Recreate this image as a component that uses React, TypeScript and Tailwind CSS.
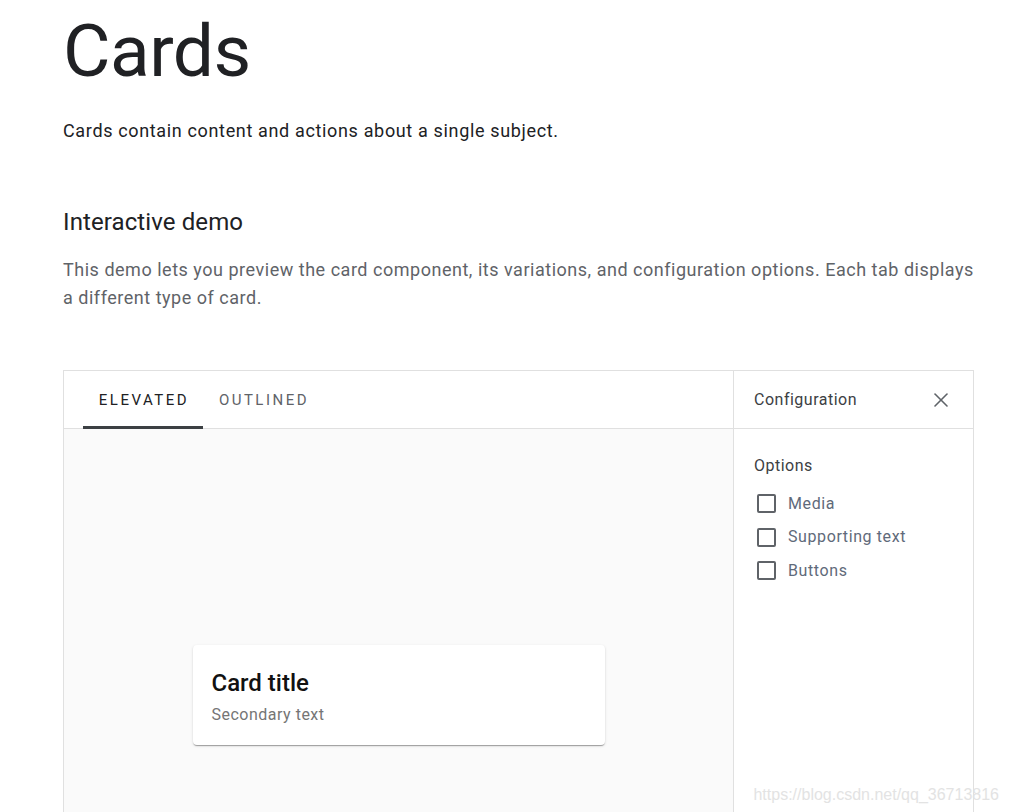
import { X } from "lucide-react";

const OPTIONS = ["Media", "Supporting text", "Buttons"];

export default function App() {
  return (
    <div
      className="relative h-[812px] overflow-hidden bg-white pl-[63px] pr-[36px] text-[#202124]"
      style={{ fontFamily: "Roboto, 'Noto Sans', sans-serif" }}
    >
      <h1 className="pt-[11px] text-[73px] leading-[80px] font-normal tracking-[-0.5px] text-[#202124]">
        Cards
      </h1>
      <p className="mt-[26px] text-[18px] leading-[28px] tracking-[0.65px] text-[#202124]">
        Cards contain content and actions about a single subject.
      </p>

      <h2 className="mt-[61px] text-[24px] leading-[32px] font-normal tracking-[0.1px] text-[#202124]">
        Interactive demo
      </h2>
      <p className="mt-[18px] text-[18px] leading-[28px] tracking-[0.52px] text-[#5f6368]">
        This demo lets you preview the card component, its variations, and configuration options. Each tab displays a
        different type of card.
      </p>

      <div className="mt-[58px] flex w-[911px] border border-[#e0e0e0]">
        {/* preview side */}
        <div className="flex flex-1 flex-col">
          <div className="flex h-[58px] items-stretch border-b border-[#e0e0e0] pl-[19px] pt-[2px]">
            <div className="relative flex w-[120px] items-center justify-center pl-[2px] text-[15px] font-normal tracking-[2.5px] text-[#202124]">
              ELEVATED
              <span className="absolute bottom-[-1px] left-0 right-0 h-[3px] bg-[#3c4043]" />
            </div>
            <div className="flex w-[120px] items-center justify-center pl-[2px] text-[15px] font-normal tracking-[2.5px] text-[#5f6368]">
              OUTLINED
            </div>
          </div>
          <div className="flex h-[532px] items-center justify-center bg-[#fafafa]">
            <div className="h-[100px] w-[412px] rounded-[4px] bg-white px-[19px] pt-[22px] shadow-[0_2px_1px_-1px_rgba(0,0,0,0.2),0_1px_1px_0_rgba(0,0,0,0.14),0_1px_3px_0_rgba(0,0,0,0.12)]">
              <div className="text-[24px] leading-[32px] font-medium text-[#111]">Card title</div>
              <div className="mt-[5px] text-[16px] leading-[22px] tracking-[0.5px] text-[#757575]">Secondary text</div>
            </div>
          </div>
        </div>

        {/* configuration side */}
        <div className="flex w-[240px] flex-col border-l border-[#e0e0e0]">
          <div className="flex h-[58px] items-center justify-between border-b border-[#e0e0e0] pl-[20px] pr-[20px]">
            <span className="text-[16px] tracking-[0.5px] text-[#3c4043]">Configuration</span>
            <X size={24} strokeWidth={1.6} className="text-[#5f6368]" />
          </div>
          <div className="px-[20px] pt-[26px]">
            <div className="text-[16px] leading-[22px] tracking-[0.5px] text-[#3c4043]">Options</div>
            <div className="mt-[10px] flex flex-col">
              {OPTIONS.map((o) => (
                <label key={o} className="flex h-[33.5px] items-center gap-[12px]">
                  <span className="ml-[3px] h-[19px] w-[19px] rounded-[2px] border-2 border-[#5f6368]" />
                  <span className="text-[16px] tracking-[0.6px] text-[#5f6a7a]">{o}</span>
                </label>
              ))}
            </div>
          </div>
        </div>
      </div>

      <div
        className="absolute bottom-[5px] right-[11px] text-[16px] text-[#e3e3e3]"
        style={{ fontFamily: "'Liberation Sans', Arial, sans-serif" }}
      >
        https://blog.csdn.net/qq_36713816
      </div>
    </div>
  );
}
